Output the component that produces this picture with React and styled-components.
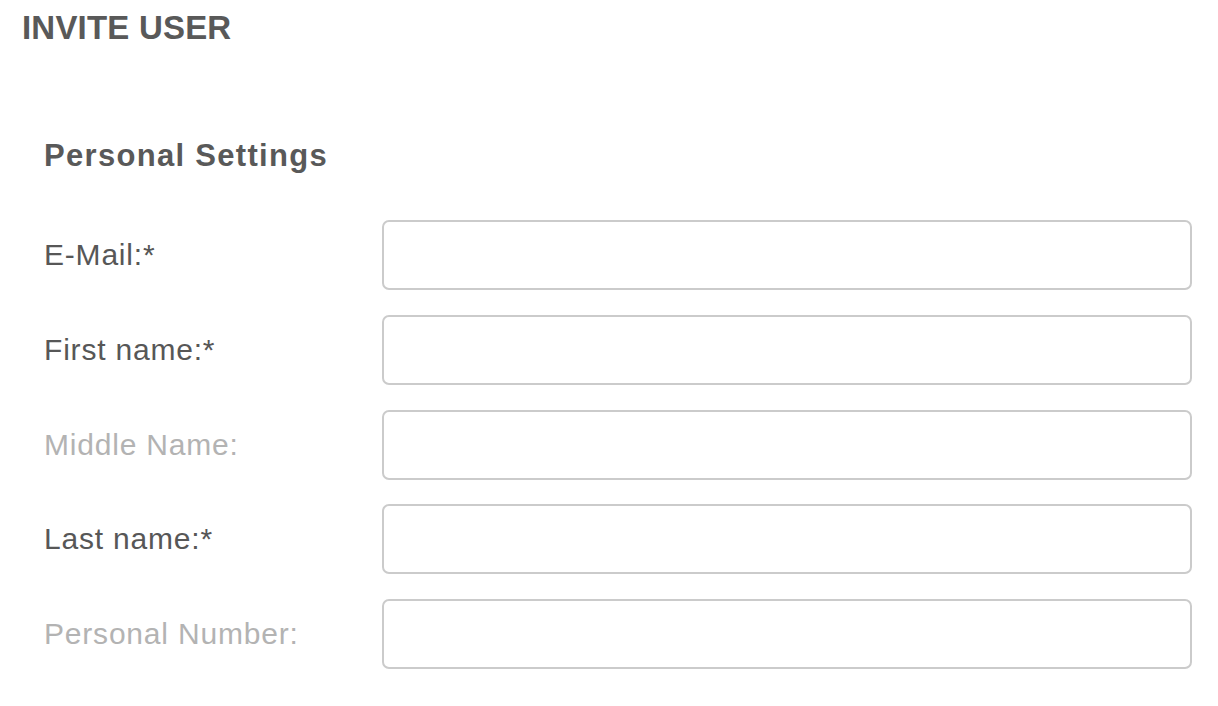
import React from 'react'
import styled, { createGlobalStyle } from 'styled-components'

const GlobalStyle = createGlobalStyle`
  body {
    margin: 0;
    background: #ffffff;
    font-family: 'Liberation Sans', Arial, sans-serif;
  }
`

const fields = [
  { label: 'E-Mail:*', name: 'email', required: true },
  { label: 'First name:*', name: 'firstName', required: true },
  { label: 'Middle Name:', name: 'middleName', required: false },
  { label: 'Last name:*', name: 'lastName', required: true },
  { label: 'Personal Number:', name: 'personalNumber', required: false },
]

function App() {
  return (
    <>
      <GlobalStyle />
      <Page>
        <Title>INVITE USER</Title>
        <Section>
          <SectionTitle>Personal Settings</SectionTitle>
          <Form>
            {fields.map((f) => (
              <Row key={f.name}>
                <Label htmlFor={f.name} $required={f.required}>{f.label}</Label>
                <Input id={f.name} name={f.name} type="text" />
              </Row>
            ))}
          </Form>
        </Section>
      </Page>
    </>
  )
}

const Page = styled.div`
  padding: 8px 26px 0 22px;
`

const Title = styled.h1`
  margin: 0;
  font-size: 33px;
  line-height: 40px;
  font-weight: bold;
  letter-spacing: 0.2px;
  color: #595959;
`

const Section = styled.section`
  padding-left: 22px;
  margin-top: 90px;
`

const SectionTitle = styled.h2`
  margin: 0;
  font-size: 31px;
  line-height: 36px;
  font-weight: bold;
  letter-spacing: 1.3px;
  color: #595959;
`

const Form = styled.form`
  display: flex;
  flex-direction: column;
  gap: 24.75px;
  margin-top: 46px;
`

const Row = styled.div`
  display: grid;
  grid-template-columns: 338px 810px;
  align-items: center;
`

const Label = styled.label`
  font-size: 30px;
  letter-spacing: 0.8px;
  color: ${(p) => (p.$required ? '#575757' : '#b3b3b3')};
`

const Input = styled.input`
  box-sizing: border-box;
  height: 70px;
  width: 100%;
  border: 2px solid #cbcbcb;
  border-radius: 7px;
  background: #ffffff;
  outline: none;
  padding: 0 16px;
  font-size: 26px;
  font-family: 'Liberation Sans', Arial, sans-serif;
`

export default App
